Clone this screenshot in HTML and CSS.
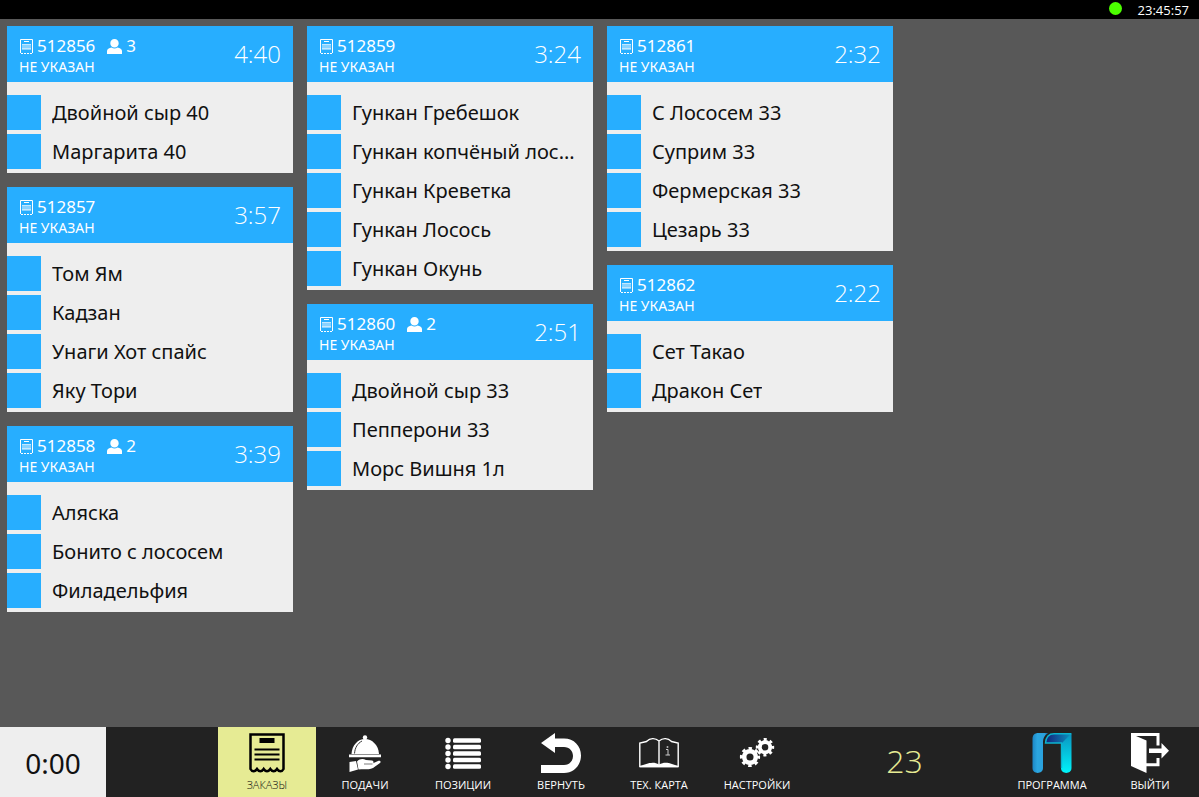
FILE: index.html
```html
<!DOCTYPE html>
<html lang="ru">
<head>
    <meta charset="UTF-8">
    <meta name="viewport" content="width=device-width, initial-scale=1.0">
    <title>Экран повара</title>
    <link rel="stylesheet" href="styles.css">
</head>
<body>
    <!-- Small icons used in the ticket headers -->
    <svg class="sprite" aria-hidden="true">
        <symbol id="icon-ticket" viewBox="0 0 13 15">
            <path d="M.5 14V.5h12V14" fill="none" stroke="#fff"/>
            <path d="M1 14.500h11" stroke="#fff" stroke-dasharray="2 1"/>
            <path d="M4 2.500h5" stroke="#fff"/>
            <path d="M2 5h9v6H2z" fill="#fff" opacity=".45"/>
            <path d="M2 5.500h9M2 9.500h9" stroke="#fff" opacity=".5"/>
        </symbol>
        <symbol id="icon-guest" viewBox="0 0 15 15">
            <path d="M7.500 0C10 0 11.700 1.800 11.700 4.200S10 8.600 7.500 8.600 3.300 6.600 3.300 4.200 5 0 7.500 0zM0 15v-3c0-2 2-3 4.500-3.500 1.800 1.300 4.200 1.300 6 0C13 9 15 10 15 12v3z" fill="#fff"/>
        </symbol>
    </svg>

    <header class="status-bar">
        <span class="status-dot"></span>
        <span class="clock">23:45:57</span>
    </header>

    <main class="board">
        <div class="column">
            <section class="ticket">
                <div class="ticket-header">
                    <div class="ticket-info">
                        <div class="ticket-line">
                            <svg class="ticket-icon"><use href="#icon-ticket"/></svg>
                            <span class="ticket-number">512856</span>
                            <svg class="guest-icon"><use href="#icon-guest"/></svg>
                            <span>3</span>
                        </div>
                        <div class="ticket-table">НЕ УКАЗАН</div>
                    </div>
                    <div class="ticket-time">4:40</div>
                </div>
                <ul class="items">
                    <li class="item"><span class="mark"></span><span class="name">Двойной сыр 40</span></li>
                    <li class="item"><span class="mark"></span><span class="name">Маргарита 40</span></li>
                </ul>
            </section>

            <section class="ticket">
                <div class="ticket-header">
                    <div class="ticket-info">
                        <div class="ticket-line">
                            <svg class="ticket-icon"><use href="#icon-ticket"/></svg>
                            <span class="ticket-number">512857</span>
                        </div>
                        <div class="ticket-table">НЕ УКАЗАН</div>
                    </div>
                    <div class="ticket-time">3:57</div>
                </div>
                <ul class="items">
                    <li class="item"><span class="mark"></span><span class="name">Том Ям</span></li>
                    <li class="item"><span class="mark"></span><span class="name">Кадзан</span></li>
                    <li class="item"><span class="mark"></span><span class="name">Унаги Хот спайс</span></li>
                    <li class="item"><span class="mark"></span><span class="name">Яку Тори</span></li>
                </ul>
            </section>

            <section class="ticket">
                <div class="ticket-header">
                    <div class="ticket-info">
                        <div class="ticket-line">
                            <svg class="ticket-icon"><use href="#icon-ticket"/></svg>
                            <span class="ticket-number">512858</span>
                            <svg class="guest-icon"><use href="#icon-guest"/></svg>
                            <span>2</span>
                        </div>
                        <div class="ticket-table">НЕ УКАЗАН</div>
                    </div>
                    <div class="ticket-time">3:39</div>
                </div>
                <ul class="items">
                    <li class="item"><span class="mark"></span><span class="name">Аляска</span></li>
                    <li class="item"><span class="mark"></span><span class="name">Бонито с лососем</span></li>
                    <li class="item"><span class="mark"></span><span class="name">Филадельфия</span></li>
                </ul>
            </section>
        </div>

        <div class="column">
            <section class="ticket">
                <div class="ticket-header">
                    <div class="ticket-info">
                        <div class="ticket-line">
                            <svg class="ticket-icon"><use href="#icon-ticket"/></svg>
                            <span class="ticket-number">512859</span>
                        </div>
                        <div class="ticket-table">НЕ УКАЗАН</div>
                    </div>
                    <div class="ticket-time">3:24</div>
                </div>
                <ul class="items">
                    <li class="item"><span class="mark"></span><span class="name">Гункан Гребешок</span></li>
                    <li class="item"><span class="mark"></span><span class="name">Гункан копчёный лос...</span></li>
                    <li class="item"><span class="mark"></span><span class="name">Гункан Креветка</span></li>
                    <li class="item"><span class="mark"></span><span class="name">Гункан Лосось</span></li>
                    <li class="item"><span class="mark"></span><span class="name">Гункан Окунь</span></li>
                </ul>
            </section>

            <section class="ticket">
                <div class="ticket-header">
                    <div class="ticket-info">
                        <div class="ticket-line">
                            <svg class="ticket-icon"><use href="#icon-ticket"/></svg>
                            <span class="ticket-number">512860</span>
                            <svg class="guest-icon"><use href="#icon-guest"/></svg>
                            <span>2</span>
                        </div>
                        <div class="ticket-table">НЕ УКАЗАН</div>
                    </div>
                    <div class="ticket-time">2:51</div>
                </div>
                <ul class="items">
                    <li class="item"><span class="mark"></span><span class="name">Двойной сыр 33</span></li>
                    <li class="item"><span class="mark"></span><span class="name">Пепперони 33</span></li>
                    <li class="item"><span class="mark"></span><span class="name">Морс Вишня 1л</span></li>
                </ul>
            </section>
        </div>

        <div class="column">
            <section class="ticket">
                <div class="ticket-header">
                    <div class="ticket-info">
                        <div class="ticket-line">
                            <svg class="ticket-icon"><use href="#icon-ticket"/></svg>
                            <span class="ticket-number">512861</span>
                        </div>
                        <div class="ticket-table">НЕ УКАЗАН</div>
                    </div>
                    <div class="ticket-time">2:32</div>
                </div>
                <ul class="items">
                    <li class="item"><span class="mark"></span><span class="name">С Лососем 33</span></li>
                    <li class="item"><span class="mark"></span><span class="name">Суприм 33</span></li>
                    <li class="item"><span class="mark"></span><span class="name">Фермерская 33</span></li>
                    <li class="item"><span class="mark"></span><span class="name">Цезарь 33</span></li>
                </ul>
            </section>

            <section class="ticket">
                <div class="ticket-header">
                    <div class="ticket-info">
                        <div class="ticket-line">
                            <svg class="ticket-icon"><use href="#icon-ticket"/></svg>
                            <span class="ticket-number">512862</span>
                        </div>
                        <div class="ticket-table">НЕ УКАЗАН</div>
                    </div>
                    <div class="ticket-time">2:22</div>
                </div>
                <ul class="items">
                    <li class="item"><span class="mark"></span><span class="name">Сет Такао</span></li>
                    <li class="item"><span class="mark"></span><span class="name">Дракон Сет</span></li>
                </ul>
            </section>
        </div>
    </main>

    <footer class="toolbar">
        <div class="timer">0:00</div>
        <nav class="menu">
            <button class="menu-button active" type="button">
                <svg viewBox="0 0 40 40" aria-hidden="true">
                    <path d="M3.500 1.500h33V36c-1.500 3-4.500 3-6.500 0-2 3-4.700 3-6.700 0-2 3-4.600 3-6.600 0-2 3-4.700 3-6.700 0-2 3-5 3-6.500 0z" fill="none" stroke="#000" stroke-width="2.500"/>
                    <path d="M12.500 5h15v5h-15z"/>
                    <path d="M7.500 16.500h25M7.500 21.500h25M7.500 26.500h25" stroke="#000" stroke-width="2"/>
                </svg>
                Заказы
            </button>
            <button class="menu-button" type="button">
                <svg viewBox="0 0 40 40" fill="#fff" aria-hidden="true">
                    <circle cx="20" cy="4.500" r="2.200"/>
                    <path d="M6.500 21C7 12 13 6 20 6s13.500 6 14 15z"/>
                    <path d="M9.500 20.500c.5-6 3-10 7.500-12.500" fill="none" stroke="#222" stroke-width=".9"/>
                    <path d="M4 21.500h32v2.700H4zM4.500 29l6.500-1 2 8.500L4.500 39z"/>
                    <path d="M12 28.500c3-3 6-3 9-1.500l6 .5c2 .5 2 2.500.5 3L33 28c2-.8 3.500.7 2 2l-7 5c-4 2-9 1-14.500 1.500z"/>
                    <path d="M19 31h8.500" stroke="#222" stroke-width=".6"/>
                </svg>
                Подачи
            </button>
            <button class="menu-button" type="button">
                <svg viewBox="0 0 40 40" fill="#fff" aria-hidden="true">
                    <circle cx="5" cy="7.500" r="2.700"/><rect x="10" y="5.200" width="28" height="4.600" rx="1.500"/>
                    <circle cx="5" cy="14" r="2.700"/><rect x="10" y="11.700" width="28" height="4.600" rx="1.500"/>
                    <circle cx="5" cy="20.500" r="2.700"/><rect x="10" y="18.200" width="28" height="4.600" rx="1.500"/>
                    <circle cx="5" cy="27" r="2.700"/><rect x="10" y="24.700" width="28" height="4.600" rx="1.500"/>
                    <circle cx="5" cy="33.500" r="2.700"/><rect x="10" y="31.200" width="28" height="4.600" rx="1.500"/>
                </svg>
                Позиции
            </button>
            <button class="menu-button" type="button">
                <svg viewBox="0 0 40 40" fill="#fff" aria-hidden="true">
                    <path d="M0 10 14 0v5.500h9C33 5.500 40 13 40 22.500S33 40 23 40H0v-8h23c5.500 0 9-4 9-9s-3.500-9-9-9h-9V20z"/>
                </svg>
                Вернуть
            </button>
            <button class="menu-button" type="button">
                <svg viewBox="0 0 40 40" aria-hidden="true">
                    <path d="M20 8C16 4.500 11 5 7.500 8.500L.8 10v23.500h38.400V10l-6.700-1.500C29 5 24 4.500 20 8zv24" fill="none" stroke="#fff" stroke-width="1.400"/>
                    <path d="M1 33c6-2 13-5.500 19-1.500C27 27.500 33 31 39 33v1.200H1z" fill="#fff"/>
                    <path d="M27 16.500h2V22m-2.500 0h4.500" fill="none" stroke="#ccc"/>
                    <path d="M27.700 13.200h1.600v1.600h-1.600z" fill="#ccc"/>
                </svg>
                Тех. карта
            </button>
            <button class="menu-button" type="button">
                <svg viewBox="0 0 40 40" fill="none" stroke="#fff" aria-hidden="true">
                    <g transform="translate(13 24)">
                        <circle r="5.800" stroke-width="4.500"/>
                        <circle r="8.600" stroke-width="3" stroke-dasharray="3.400 3.354" stroke-dashoffset="1.700"/>
                    </g>
                    <g transform="translate(28 14.200)">
                        <circle r="5.200" stroke-width="3.800"/>
                        <circle r="7.800" stroke-width="2.800" stroke-dasharray="3 3.126" stroke-dashoffset="1.500"/>
                    </g>
                </svg>
                Настройки
            </button>
        </nav>
        <div class="counter">23</div>
        <nav class="menu">
            <button class="menu-button" type="button">
                <svg viewBox="0 0 40 40" aria-hidden="true">
                    <defs>
                        <linearGradient id="logo-left" x1="0" y1="0" x2="1" y2="0">
                            <stop offset="0" stop-color="#1c86c6"/>
                            <stop offset=".3" stop-color="#2ba6e0"/>
                            <stop offset=".75" stop-color="#2ba0dc"/>
                            <stop offset="1" stop-color="#0a5c94"/>
                        </linearGradient>
                        <linearGradient id="logo-top" x1="0" y1="0" x2="1" y2="0">
                            <stop offset="0" stop-color="#16207a"/>
                            <stop offset="1" stop-color="#0a93c0"/>
                        </linearGradient>
                        <linearGradient id="logo-right" x1="0" y1="0" x2="0" y2="1">
                            <stop offset="0" stop-color="#0a93c0"/>
                            <stop offset="1" stop-color="#00f4fa"/>
                        </linearGradient>
                    </defs>
                    <path d="M.5 6c0-4 2-6 6-6h10c-4 2-5.500 5-5.500 10v25c0 6.500-10.500 6.500-10.500 0z" fill="url(#logo-left)"/>
                    <path d="M29 .5h10.500V35c0 6.500-10.500 6.500-10.500 0z" fill="url(#logo-right)"/>
                    <path d="M13.500 10C14 4 17 .7 22 .7h17L30 10z" fill="url(#logo-top)"/>
                    <path d="M29.500 35V10h-16C14 4 17 .7 22 .7h17.300" fill="none" stroke="#0bb4cf" stroke-width="1.400"/>
                </svg>
                Программа
            </button>
            <button class="menu-button" type="button">
                <svg viewBox="0 0 40 40" aria-hidden="true">
                    <path d="M1 0h28.500v12.500h-3V3H6l10.500 4.500v22.800h10V25h3v8.300h-13V40L1 33z" fill="#fff"/>
                    <path d="M19 15.500h12.500V10l7.500 7.800-7.500 7.700V20H19z" fill="#fff"/>
                </svg>
                Выйти
            </button>
        </nav>
    </footer>
</body>
</html>
```
FILE: styles.css
```css
* {
    box-sizing: border-box;
}

body {
    margin: 0;
    min-height: 100vh;
    display: flex;
    flex-direction: column;
    background-color: #585858;
    color: #111;
    font-family: 'Noto Sans', 'Open Sans', sans-serif;
}

.sprite {
    position: absolute;
    width: 0;
    height: 0;
}

.status-bar {
    display: flex;
    justify-content: flex-end;
    align-items: center;
    gap: 16px;
    height: 19px;
    padding: 0 10px;
    background-color: #000;
    color: #fff;
    font-family: 'Open Sans', sans-serif;
    font-size: 13px;
    line-height: 18px;
}

.status-dot {
    width: 13px;
    height: 13px;
    margin-bottom: 2px;
    border-radius: 50%;
    background-color: #4cff00;
}

.board {
    flex: 1;
    display: grid;
    grid-template-columns: repeat(4, minmax(0, 1fr));
    gap: 14px;
    align-items: start;
    padding: 7px 6px 7px 7px;
}

.column {
    display: flex;
    flex-direction: column;
    gap: 14px;
}

.ticket {
    background-color: #eee;
}

.ticket-header {
    display: flex;
    justify-content: space-between;
    height: 56px;
    padding: 0 12px;
    background-color: #27aeff;
    color: #fff;
}

.ticket-info {
    padding-top: 9px;
}

.ticket-line {
    display: flex;
    align-items: center;
    font-size: 17px;
    line-height: 22px;
}

.ticket-icon {
    width: 13px;
    height: 15px;
    margin: 0 4px 0 1px;
}

.guest-icon {
    width: 15px;
    height: 15px;
    margin: 0 4px 0 12px;
}

.ticket-table {
    font-size: 14px;
    line-height: 20px;
}

.ticket-time {
    font-family: 'Open Sans', sans-serif;
    font-size: 24px;
    font-weight: 300;
    line-height: 56px;
}

.items {
    list-style: none;
    margin: 0;
    padding: 13px 0 0;
    overflow: hidden;
}

.item {
    display: flex;
    gap: 11px;
    height: 35px;
    margin-bottom: 4px;
    padding-right: 12px;
}

.mark {
    flex: none;
    width: 34px;
    background-color: #27aeff;
}

.name {
    overflow: hidden;
    text-overflow: ellipsis;
    white-space: nowrap;
    font-size: 20px;
    line-height: 35px;
}

.toolbar {
    display: flex;
    height: 70px;
    background-color: #222;
}

.timer {
    width: 106px;
    margin-right: 112px;
    background-color: #eee;
    font-size: 28px;
    line-height: 72px;
    text-align: center;
}

.menu {
    display: flex;
}

.menu-button {
    display: flex;
    flex-direction: column;
    align-items: center;
    gap: 5px;
    width: 98px;
    padding: 6px 0 0;
    border: none;
    background: none;
    color: #fff;
    font-family: 'Open Sans', sans-serif;
    font-size: 11px;
    line-height: 14px;
    text-transform: uppercase;
    cursor: pointer;
}

.menu-button svg {
    width: 40px;
    height: 40px;
}

.menu-button.active {
    background-color: #e6eb94;
    color: #111;
    font-weight: 300;
}

.counter {
    flex: 1;
    color: #e6eb94;
    font-family: 'Open Sans', sans-serif;
    font-size: 32px;
    font-weight: 300;
    line-height: 68px;
    text-align: center;
}
```
